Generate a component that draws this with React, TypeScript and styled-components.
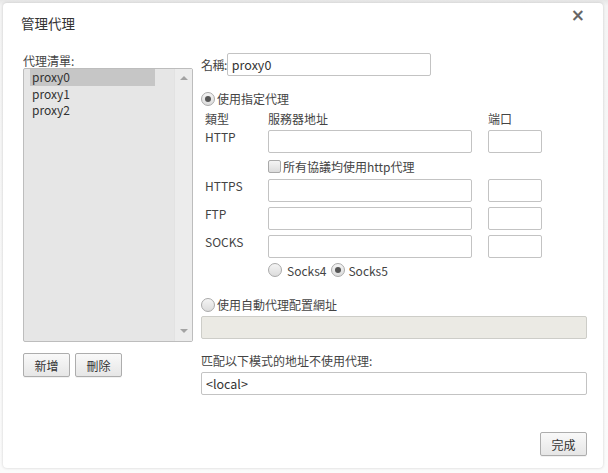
import React from "react";
import styled, { createGlobalStyle } from "styled-components";

const FONT = `"Noto Sans CJK TC", "Noto Sans", sans-serif`;

const GlobalStyle = createGlobalStyle`
  html, body {
    margin: 0;
    padding: 0;
    background: #ffffff;
  }
  body {
    font-family: ${FONT};
    font-size: 12px;
    color: #333;
  }
`;

const proxies = ["proxy0", "proxy1", "proxy2"];

const rows = [
  { name: "HTTP", extra: true },
  { name: "HTTPS" },
  { name: "FTP" },
  { name: "SOCKS" },
];

const App = () => {
  return (
    <>
      <GlobalStyle />
      <Page>
        <Dialog>
          <Header>
            <Title>管理代理</Title>
            <Close>×</Close>
          </Header>
          <Body>
            <LeftColumn>
              <FieldLabel>代理清單:</FieldLabel>
              <ListBox>
                <Items>
                  {proxies.map((p, i) => (
                    <Item key={p} selected={i === 0}>
                      {p}
                    </Item>
                  ))}
                </Items>
                <ScrollBar>
                  <Arrow up />
                  <Arrow />
                </ScrollBar>
              </ListBox>
              <ButtonRow>
                <Button>新增</Button>
                <Button>刪除</Button>
              </ButtonRow>
            </LeftColumn>
            <RightColumn>
              <NameRow>
                <NameLabel>名稱:</NameLabel>
                <TextInput width={204} defaultValue="proxy0" />
              </NameRow>
              <RadioRow top={15} bottom={5}>
                <Radio checked />
                <span>使用指定代理</span>
              </RadioRow>
              <ProxyGrid>
                <HeadCell>類型</HeadCell>
                <HeadCell>服務器地址</HeadCell>
                <HeadCell>端口</HeadCell>
                {rows.map((r) => (
                  <React.Fragment key={r.name}>
                    <TypeCell>{r.name}</TypeCell>
                    <TextInput width={204} />
                    <TextInput />
                    {r.extra && (
                      <CheckRow>
                        <CheckBox />
                        <span>所有協議均使用http代理</span>
                      </CheckRow>
                    )}
                  </React.Fragment>
                ))}
                <SocksRow>
                  <Radio />
                  <SocksText>Socks4</SocksText>
                  <Radio checked />
                  <SocksText>Socks5</SocksText>
                </SocksRow>
              </ProxyGrid>
              <RadioRow top={19} bottom={3}>
                <Radio />
                <span>使用自動代理配置網址</span>
              </RadioRow>
              <TextInput disabled />
              <FieldLabel top={15} bottom={4}>
                匹配以下模式的地址不使用代理:
              </FieldLabel>
              <TextInput defaultValue="<local>" />
            </RightColumn>
          </Body>
          <Footer>
            <Button>完成</Button>
          </Footer>
        </Dialog>
      </Page>
    </>
  );
};

export default App;

const Page = styled.div`
  width: 608px;
  height: 473px;
  padding: 3px 5px 5px 3px;
  box-sizing: border-box;
  background: linear-gradient(#e6e6e6, #f4f4f4 6px, #fbfbfb);
`;

const Dialog = styled.div`
  width: 600px;
  height: 465px;
  background: #fff;
  border-radius: 4px;
  box-shadow: 0 0 3px rgba(0, 0, 0, 0.18);
  box-sizing: border-box;
  padding: 0 16px 0 20px;
  display: flex;
  flex-direction: column;
`;

const Header = styled.div`
  height: 44px;
  display: flex;
  align-items: center;
  justify-content: space-between;
  padding-top: 1px;
  box-sizing: border-box;
`;

const Title = styled.div`
  font-size: 13.5px;
  color: #333;
  line-height: 20px;
  margin-left: -2px;
  margin-top: -5px;
`;

const Close = styled.div`
  font-family: "DejaVu Sans", sans-serif;
  font-size: 17px;
  font-weight: bold;
  color: #666;
  line-height: 16px;
  margin-top: -21px;
  margin-right: 2px;
`;

const Body = styled.div`
  display: flex;
  gap: 8px;
  margin-top: 6px;
`;

const LeftColumn = styled.div`
  width: 170px;
  display: flex;
  flex-direction: column;
  padding-top: 1px;
`;

const FieldLabel = styled.div<{ top?: number; bottom?: number }>`
  line-height: 14px;
  color: #444;
  margin-top: ${(p) => p.top || 0}px;
  margin-bottom: ${(p) => p.bottom || 0}px;
`;

const ListBox = styled.div`
  height: 274px;
  border: 1px solid #bdbdbd;
  border-radius: 2px;
  background: #e6e6e6;
  display: flex;
  box-sizing: border-box;
`;

const Items = styled.div`
  flex: 1;
  padding: 0 0 0 6px;
`;

const Item = styled.div<{ selected?: boolean }>`
  width: 125px;
  height: 16.5px;
  line-height: 16.5px;
  font-size: 12px;
  padding-left: 2px;
  box-sizing: border-box;
  overflow: hidden;
  color: #333;
  background: ${(p) => (p.selected ? "#c6c6c6" : "transparent")};
`;

const ScrollBar = styled.div`
  width: 17px;
  background: #ececec;
  border-left: 1px solid #e2e2e2;
  display: flex;
  flex-direction: column;
  justify-content: space-between;
  align-items: center;
  padding: 7px 0 8px;
`;

const Arrow = styled.div<{ up?: boolean }>`
  width: 0;
  height: 0;
  border-left: 4px solid transparent;
  border-right: 4px solid transparent;
  ${(p) =>
    p.up ? "border-bottom: 4px solid #a3a3a3;" : "border-top: 4px solid #a3a3a3;"}
`;

const ButtonRow = styled.div`
  display: flex;
  gap: 5px;
  margin-top: 11px;
`;

const Button = styled.button`
  width: 47px;
  height: 24px;
  padding: 0;
  font-family: ${FONT};
  font-size: 12px;
  color: #333;
  border: 1px solid #adadad;
  border-radius: 2px;
  background: linear-gradient(#f9f9f9, #e6e6e6);
  box-shadow: 0 1px 0 rgba(0, 0, 0, 0.05);
`;

const RightColumn = styled.div`
  flex: 1;
  display: flex;
  flex-direction: column;
`;

const NameRow = styled.div`
  display: flex;
  align-items: center;
`;

const NameLabel = styled.span`
  color: #444;
  letter-spacing: -0.5px;
`;

const TextInput = styled.input<{ width?: number }>`
  width: ${(p) => (p.width ? `${p.width}px` : "100%")};
  height: 23px;
  box-sizing: border-box;
  border: 1px solid #c3c3c3;
  border-radius: 2px;
  padding: 0 4px;
  font-family: ${FONT};
  font-size: 12.5px;
  color: #333;
  background: #fff;
  outline: none;
  margin: 0;
  &:disabled {
    background: #ebeae4;
    border-color: #cdcdc8;
  }
`;

const RadioRow = styled.div<{ top: number; bottom: number }>`
  display: flex;
  align-items: center;
  gap: 2px;
  height: 16px;
  line-height: 16px;
  margin-top: ${(p) => p.top}px;
  margin-bottom: ${(p) => p.bottom}px;
  color: #444;
`;

const Radio = styled.span<{ checked?: boolean }>`
  width: 14px;
  height: 14px;
  box-sizing: border-box;
  border-radius: 50%;
  border: 1px solid #a9a9a9;
  background: linear-gradient(#f4f4f4, #dcdcdc);
  display: inline-flex;
  align-items: center;
  justify-content: center;
  flex-shrink: 0;
  &::after {
    content: "";
    display: ${(p) => (p.checked ? "block" : "none")};
    width: 6px;
    height: 6px;
    border-radius: 50%;
    background: #555;
  }
`;

const ProxyGrid = styled.div`
  display: grid;
  grid-template-columns: 67px 220px 54px;
  row-gap: 5px;
  align-items: start;
`;

const HeadCell = styled.div`
  color: #444;
  line-height: 14px;
  margin-bottom: -1px;
  &:first-child {
    padding-left: 4px;
  }
`;

const TypeCell = styled.div`
  color: #444;
  line-height: 14px;
  padding: 0 0 0 4px;
`;

const CheckRow = styled.div`
  grid-column: 2 / 4;
  display: flex;
  align-items: center;
  gap: 2px;
  height: 15px;
  margin: 1px 0 0;
  color: #444;
`;

const CheckBox = styled.span`
  width: 13px;
  height: 13px;
  box-sizing: border-box;
  border: 1px solid #a9a9a9;
  border-radius: 2px;
  background: linear-gradient(#f4f4f4, #dcdcdc);
`;

const SocksRow = styled.div`
  grid-column: 2 / 4;
  display: flex;
  align-items: center;
  height: 16px;
  margin-top: -1px;
  color: #444;
`;

const SocksText = styled.span`
  margin: 0 5px 0 5px;
  &:last-child {
    margin-left: 3px;
  }
`;

const Footer = styled.div`
  margin-top: auto;
  margin-bottom: 12px;
  display: flex;
  justify-content: flex-end;
`;
